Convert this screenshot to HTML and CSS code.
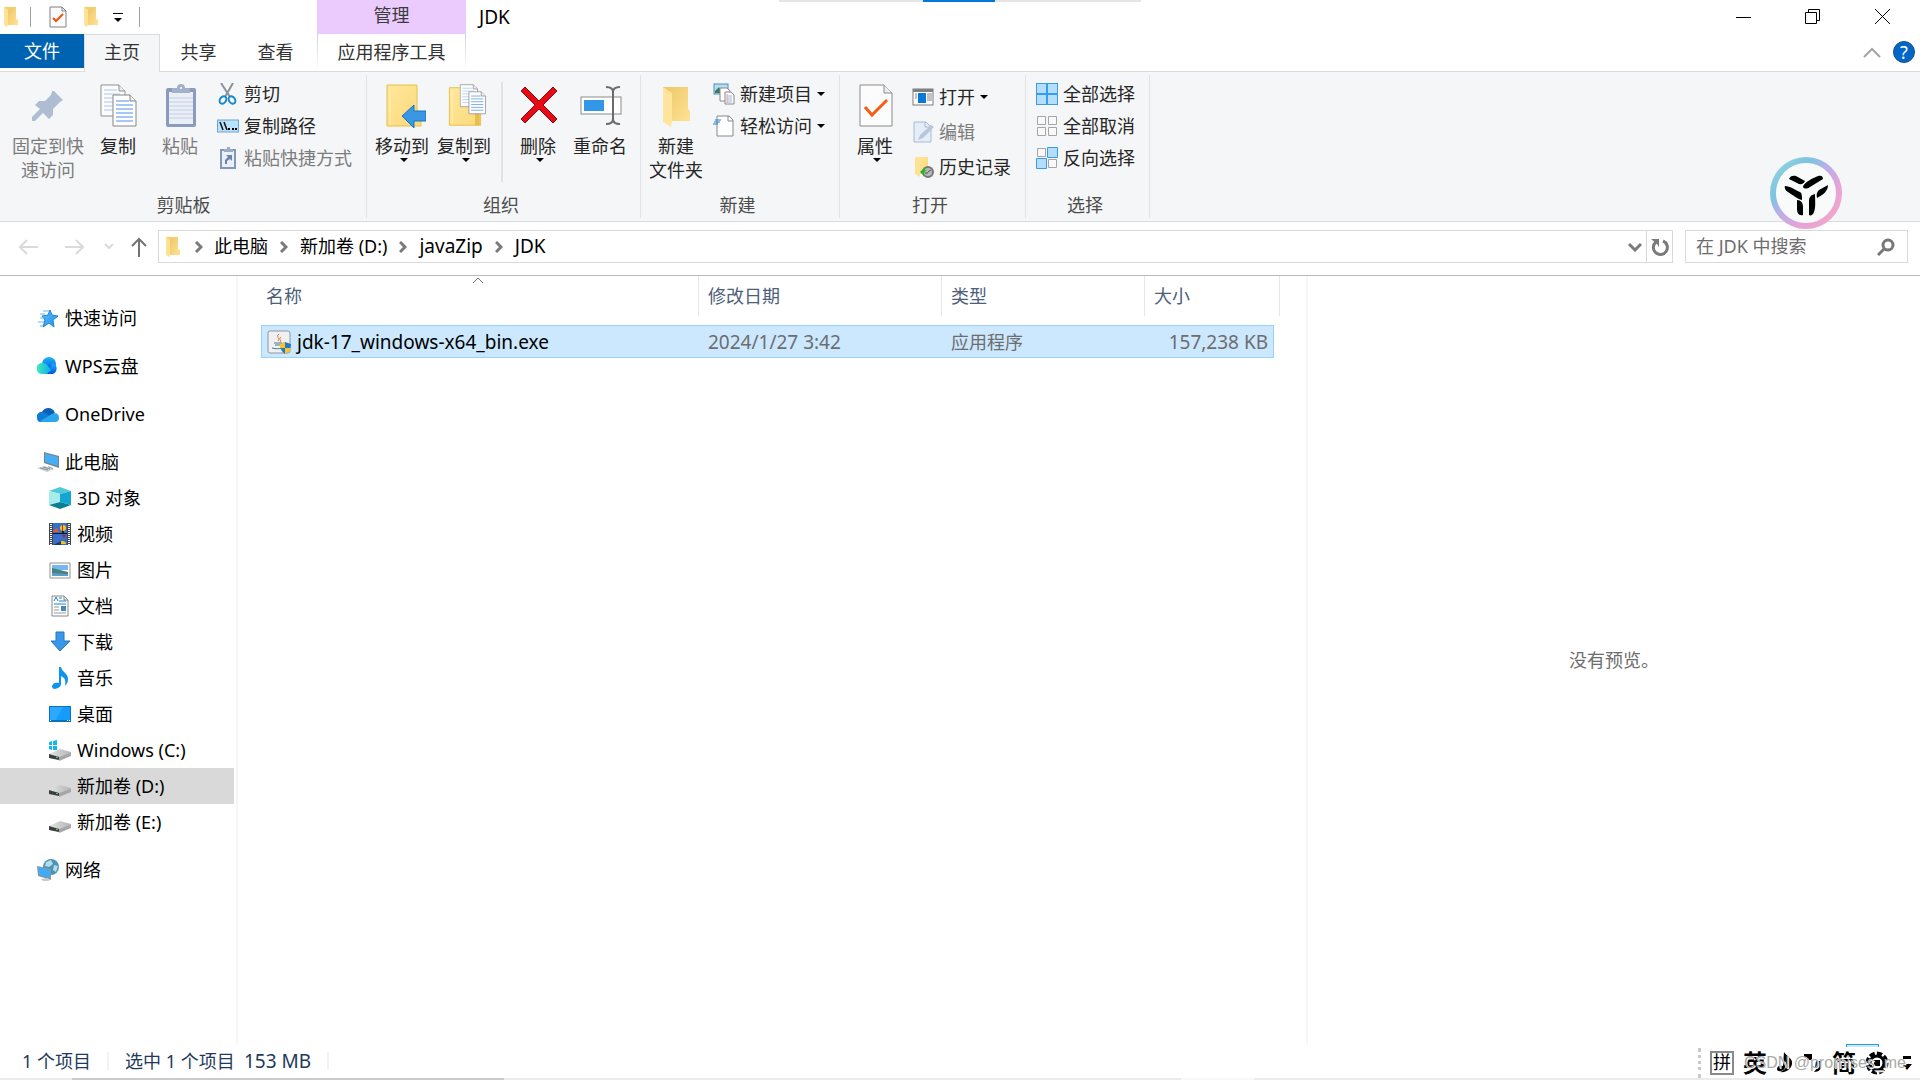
FILE: index.html
```html
<!DOCTYPE html>
<html lang="zh-CN">
<head>
    <meta charset="utf-8">
    <title>JDK</title>
    <link rel="stylesheet" href="styles.css">
</head>
<body>
    <!-- shared icons -->
    <svg class="defs" aria-hidden="true">
        <defs>
            <linearGradient id="gold" x1="0" y1="0" x2="1" y2="1">
                <stop offset="0" stop-color="#ffe79b"/>
                <stop offset="1" stop-color="#fbd978"/>
            </linearGradient>
            <linearGradient id="goldDark" x1="0" y1="0" x2="1" y2="1">
                <stop offset="0" stop-color="#ecc765"/>
                <stop offset="1" stop-color="#ffe294"/>
            </linearGradient>
            <linearGradient id="ring" x1="0" y1="0" x2="1" y2="1">
                <stop offset="0" stop-color="#9bd6e0"/>
                <stop offset="0.28" stop-color="#7cc4e0"/>
                <stop offset="0.45" stop-color="#b8b0ea"/>
                <stop offset="0.7" stop-color="#e6a3d6"/>
                <stop offset="1" stop-color="#f7a8c4"/>
            </linearGradient>
            <linearGradient id="sky" x1="0" y1="0" x2="1" y2="1">
                <stop offset="0" stop-color="#5fbcf7"/>
                <stop offset="1" stop-color="#1e93ee"/>
            </linearGradient>
            <linearGradient id="wpsLeft" x1="0" y1="0" x2="1" y2="0">
                <stop offset="0" stop-color="#3df0b4"/>
                <stop offset="1" stop-color="#12a8f0"/>
            </linearGradient>
            <linearGradient id="wpsRight" x1="0" y1="0" x2="0" y2="1">
                <stop offset="0" stop-color="#18b8fa"/>
                <stop offset="1" stop-color="#0850dd"/>
            </linearGradient>
            <linearGradient id="metal" x1="0" y1="0" x2="1" y2="0">
                <stop offset="0" stop-color="#e4e4e6"/>
                <stop offset="1" stop-color="#b4b4b6"/>
            </linearGradient>
        </defs>

        <symbol id="folder" viewBox="0 0 16 22">
            <path d="M5 1h8v12l2 1v5H5z" fill="url(#goldDark)"/>
            <path d="M1 1l4 2v16l-1 2-3-2z" fill="#ffe294"/>
            <path d="M1 1h8l-4 3z" fill="#f6cf6c"/>
        </symbol>
        <symbol id="drive" viewBox="0 0 22 22">
            <path d="M0 15l11-5 11 3v3l-11 5-11-2z" fill="url(#metal)"/>
            <path d="M0 15l10 3v3L0 19z" fill="#3c3d40"/>
            <path d="M10 18l12-4v3l-12 5z" fill="#a5a6a8"/>
            <path d="M7 18h2v1H7z" fill="#35e045"/>
        </symbol>
        <symbol id="caret" viewBox="0 0 8 4">
            <path d="M0 0h8L4 4z"/>
        </symbol>
        <symbol id="crumb" viewBox="0 0 8 12">
            <path d="M1 1l5 5-5 5" fill="none" stroke="#7a7a7a" stroke-width="3"/>
        </symbol>
        <symbol id="sheets" viewBox="0 0 38 44">
            <path d="M1 1h18l6 6v25H1z" fill="#fcfcfc" stroke="#8f8f8f"/>
            <path d="M19 1v6h6" fill="#eee" stroke="#8f8f8f"/>
            <path d="M4 6h13M4 10h16M4 14h12M4 18h12M4 22h12M4 26h12" stroke="#a9c8f5"/>
            <path d="M13 11h17l6 6v25H13z" fill="#fff" stroke="#858585"/>
            <path d="M30 11v6h6" fill="#eee" stroke="#858585"/>
            <path d="M16 17h13M16 21h17M16 25h17M16 29h17M16 33h17M16 37h17" stroke="#4f8fe8"/>
        </symbol>
    </svg>

    <div class="drag-strip"></div>

    <header class="titlebar">
        <div class="quick-tools">
            <svg class="folder-small"><use href="#folder"/></svg>
            <span class="tool-sep"></span>
            <button class="tool tool-props" aria-label="属性">
                <svg width="18" height="22" viewBox="0 0 18 22"><path d="M1 1h12l4 4v16H1z" fill="#fbfbfb" stroke="#808080"/><path d="M13 1v4h4" fill="none" stroke="#808080"/><path d="M4 12l3 3 7-7" fill="none" stroke="#f2500f" stroke-width="2"/></svg>
            </button>
            <button class="tool tool-folder" aria-label="新建文件夹"><svg class="folder-small"><use href="#folder"/></svg></button>
            <button class="tool" aria-label="自定义快速访问工具栏">
                <svg width="10" height="9" viewBox="0 0 10 9"><path d="M0 0h10v1H0zM1 5h8L5 9z"/></svg>
            </button>
            <span class="tool-sep"></span>
        </div>
        <div class="context-title">管理</div>
        <div class="title latin">JDK</div>
        <div class="window-buttons">
            <button aria-label="最小化"><svg width="15" height="15"><path d="M0 7h15v1H0z"/></svg></button>
            <button aria-label="还原"><svg width="16" height="16" fill="none" stroke="#000"><path d="M0.500 3.500h11v11h-11zM3.500 3V.5h11v11H12"/></svg></button>
            <button aria-label="关闭"><svg width="16" height="16" stroke="#000"><path d="M0 0l15 15M15 0L0 15"/></svg></button>
        </div>
    </header>

    <nav class="tabs">
        <button class="tab tab-file">文件</button>
        <button class="tab tab-active">主页</button>
        <button class="tab">共享</button>
        <button class="tab">查看</button>
        <button class="tab tab-context">应用程序工具</button>
        <div class="tabs-right">
            <button aria-label="折叠功能区"><svg width="18" height="11" fill="none" stroke="#a3a3a3" stroke-width="2"><path d="M1 10l8-8 8 8"/></svg></button>
            <button class="help" aria-label="帮助">?</button>
        </div>
    </nav>

    <section class="ribbon">
        <div class="group group-clip">
            <div class="group-body">
                <button class="big big-wide disabled">
                    <svg width="34" height="44" viewBox="0 0 34 44"><path d="M22 7l9 9-3 2-1 1-6 6v6l-4 4-6-6L3 37H0v-4l8-8-5-4 4-4h6l6-6 1-4z" fill="#aebdd2"/></svg>
                    <span>固定到快<br>速访问</span>
                </button>
                <button class="big">
                    <svg width="38" height="44"><use href="#sheets"/></svg>
                    <span>复制</span>
                </button>
                <button class="big disabled">
                    <svg width="32" height="44" viewBox="0 0 32 44"><rect x="1" y="4" width="30" height="39" rx="2" fill="#8b9bbd"/><path d="M4 8h24v32H4z" fill="#e9eef7"/><path d="M4 14h24M4 18h24M4 22h24M4 26h24M4 30h24M4 34h24" stroke="#c3cfe2"/><path d="M7 4h5a4 4 0 0 1 8 0h5v5H7z" fill="#a2b0cb"/><circle cx="16" cy="4" r="1" fill="#fff"/></svg>
                    <span>粘贴</span>
                </button>
                <div class="stack">
                    <button class="small">
                        <svg width="22" height="22" viewBox="0 0 22 22"><path d="M4 0l9 14M16 0L8 14" stroke="#8d9299" stroke-width="2"/><g fill="none" stroke="#1787cf" stroke-width="2"><ellipse cx="6" cy="17" rx="3" ry="4" transform="rotate(35 6 17)"/><ellipse cx="15" cy="17" rx="3" ry="4" transform="rotate(-35 15 17)"/></g></svg>
                        剪切
                    </button>
                    <button class="small">
                        <svg width="22" height="22" viewBox="0 0 22 22"><rect x="0.500" y="5" width="21" height="12" fill="#b9e2fb" stroke="#6aa5d0"/><path d="M3 7l3 8M7 7l3 8" stroke="#111" stroke-width="1.500"/><path d="M11 13h2v2h-2zM15 13h2v2h-2zM18 13h2v2h-2z"/></svg>
                        复制路径
                    </button>
                    <button class="small disabled">
                        <svg width="22" height="22" viewBox="0 0 22 22"><rect x="3" y="2" width="16" height="20" fill="#8497b9"/><path d="M5 4h12v16H5z" fill="#eaf0f9"/><path d="M7 2h3V0h3v2h3v3H7z" fill="#9babc7"/><path d="M8 17v-4l3-3-2-2h6v6l-2-2-3 2v3z" fill="#6b82ab"/></svg>
                        粘贴快捷方式
                    </button>
                </div>
            </div>
            <div class="group-name">剪贴板</div>
        </div>

        <div class="group group-org">
            <div class="group-body">
                <button class="big">
                    <svg width="46" height="44" viewBox="-6 0 46 44"><path d="M1 1h30v25l4 3v13H1z" fill="url(#gold)" stroke="#e6c04d"/><path d="M4 3v37" stroke="#fff0bd"/><path d="M16 32l12-11v6h12v10H28v7z" fill="#3a97e6" stroke="#1f72ba"/></svg>
                    <span>移动到</span>
                    <svg class="caret"><use href="#caret"/></svg>
                </button>
                <button class="big">
                    <svg width="48" height="48" viewBox="-6 0 48 48"><path d="M1 4h30v26l4 3v12H1z" fill="url(#gold)" stroke="#e6c04d"/><path d="M4 6v37" stroke="#fff0bd"/><path d="M29 31l5 2v12h-5z" fill="#e8bd50"/><svg x="12" y="0" width="30" height="34" viewBox="0 0 38 44" preserveAspectRatio="none"><use href="#sheets"/></svg></svg>
                    <span>复制到</span>
                    <svg class="caret"><use href="#caret"/></svg>
                </button>
                <span class="group-sep"></span>
                <button class="big">
                    <svg width="38" height="44" viewBox="0 0 38 44"><path d="M1 7l4-4 14 14L33 3l4 4-14 14 14 14-4 4-14-14L5 39l-4-4 14-14z" fill="#e60a14" stroke="#8d0c12" stroke-width="1"/></svg>
                    <span>删除</span>
                    <svg class="caret"><use href="#caret"/></svg>
                </button>
                <button class="big">
                    <svg width="42" height="44" viewBox="0 0 42 44"><rect x="1" y="13" width="40" height="17" fill="#fff" stroke="#8b8b8b"/><path d="M4 16h20v11H4z" fill="#3397e8"/><path d="M26 3c5 0 7 2 7 5 0-3 2-5 7-5M33 8v27M26 40c5 0 7-2 7-5 0 3 2 5 7 5" fill="none" stroke="#6b6b6b" stroke-width="2"/></svg>
                    <span>重命名</span>
                </button>
            </div>
            <div class="group-name">组织</div>
        </div>

        <div class="group group-new">
            <div class="group-body">
                <button class="big">
                    <svg width="30" height="44" viewBox="0 0 30 44"><path d="M1 3h25v22l2 2v10H8z" fill="url(#goldDark)"/><path d="M1 3l9 6v28l-1 6-8-5z" fill="#ffe49b"/></svg>
                    <span>新建<br>文件夹</span>
                </button>
                <div class="stack">
                    <button class="small">
                        <svg width="22" height="22" viewBox="0 0 22 22"><rect x="1" y="1" width="14" height="10" fill="#b6ddf0" stroke="#4d8db3"/><path d="M2 8l4-4 3 6H2z" fill="#397b6a"/><path d="M7 5h7l3 3v10H7z" fill="#fff" stroke="#888"/><path d="M12 9h6l3 3v9h-9z" fill="#fff" stroke="#888"/><path d="M14 13h5M14 15h5M14 17h5M14 19h5" stroke="#9bb8e0"/><path d="M14 11v9" stroke="#e99"/></svg>
                        新建项目
                        <svg class="caret"><use href="#caret"/></svg>
                    </button>
                    <button class="small">
                        <svg width="22" height="22" viewBox="0 0 22 22"><path d="M4 1h12l4 4v16H4z" fill="#fff" stroke="#888"/><path d="M15 1v5h5" fill="none" stroke="#888"/><path d="M2 5h6M1 7h6M0 9h5" stroke="#1c7fcc"/></svg>
                        轻松访问
                        <svg class="caret"><use href="#caret"/></svg>
                    </button>
                </div>
            </div>
            <div class="group-name">新建</div>
        </div>

        <div class="group group-open">
            <div class="group-body">
                <button class="big">
                    <svg width="34" height="44" viewBox="0 0 34 44"><path d="M1 1h24l8 8v33H1z" fill="#fcfcfc" stroke="#8a8a8a"/><path d="M25 1v8h8" fill="#eee" stroke="#8a8a8a"/><path d="M6 23l7 8 15-15" fill="none" stroke="#f95c10" stroke-width="3"/></svg>
                    <span>属性</span>
                    <svg class="caret"><use href="#caret"/></svg>
                </button>
                <div class="stack stack-tall">
                    <button class="small">
                        <svg width="22" height="22" viewBox="0 0 22 22"><rect x="1" y="3" width="20" height="16" fill="#fff" stroke="#7d7d7d"/><path d="M1 3h20v3H1z" fill="#808080"/><path d="M6 7h8v10H6z" fill="#0a78d6"/><path d="M3 8h2M3 10h2M3 12h2M15 8h5M15 10h5M15 12h5M15 14h5" stroke="#888"/></svg>
                        打开
                        <svg class="caret"><use href="#caret"/></svg>
                    </button>
                    <button class="small disabled">
                        <svg width="22" height="22" viewBox="0 0 22 22"><path d="M2 1h12l5 5v15H2z" fill="#e5edf8" stroke="#a8b9d4"/><path d="M13 1v5h5" fill="none" stroke="#a8b9d4"/><path d="M6 19l2-5L19 4l3 2-11 11z" fill="#b7c6de"/></svg>
                        编辑
                    </button>
                    <button class="small">
                        <svg width="22" height="22" viewBox="0 0 22 22"><path d="M3 1h13v17H6z" fill="url(#gold)"/><path d="M3 1l5 3v15l-1 2-4-3z" fill="#ffe294"/><circle cx="16" cy="16" r="5" fill="#b5b9b9" stroke="#777" stroke-width="2"/><path d="M16 16l3-2M13 17h3" fill="none" stroke="#555"/><path d="M8 16l5-5v3h3c-3 0-4 2-4 6z" fill="#28b52d"/></svg>
                        历史记录
                    </button>
                </div>
            </div>
            <div class="group-name">打开</div>
        </div>

        <div class="group group-select">
            <div class="group-body">
                <div class="stack">
                    <button class="small">
                        <svg width="22" height="22" viewBox="0 0 22 22"><path d="M0 0h22v22H0z" fill="#3a9be8"/><path d="M1 1h9v9H1zM12 1h9v9h-9zM1 12h9v9H1zM12 12h9v9h-9z" fill="#b3defc"/></svg>
                        全部选择
                    </button>
                    <button class="small">
                        <svg width="22" height="22" viewBox="0 0 22 22" fill="#f9f9f9" stroke="#a5a5a5"><path d="M1.500 1.500h8v8h-8zM12.500 1.500h8v8h-8zM1.500 12.500h8v8h-8zM12.500 12.500h8v8h-8z"/></svg>
                        全部取消
                    </button>
                    <button class="small">
                        <svg width="22" height="22" viewBox="0 0 22 22"><path d="M1.500 1.500h8v8h-8zM12.500 12.500h8v8h-8z" fill="#f9f9f9" stroke="#a5a5a5"/><path d="M11.500 .5h10v10h-10zM.5 11.500h10v10H.5z" fill="#b3defc" stroke="#3a9be8"/></svg>
                        反向选择
                    </button>
                </div>
            </div>
            <div class="group-name">选择</div>
        </div>
    </section>

    <section class="address-row">
        <div class="history">
            <button aria-label="后退"><svg width="20" height="18" fill="none" stroke="#dadada" stroke-width="2"><path d="M19 9H1M8 2L1 9l7 7"/></svg></button>
            <button aria-label="前进"><svg width="20" height="18" fill="none" stroke="#dadada" stroke-width="2"><path d="M0 9h18M11 2l7 7-7 7"/></svg></button>
            <button aria-label="最近位置"><svg width="10" height="8" fill="none" stroke="#dadada" stroke-width="2"><path d="M1 1l4 4 4-4"/></svg></button>
            <button aria-label="上移"><svg width="17" height="20" fill="none" stroke="#737373" stroke-width="2"><path d="M8 20V2M1 9l7-7 7 7"/></svg></button>
        </div>
        <div class="address">
            <svg class="folder-small"><use href="#folder"/></svg>
            <svg class="crumb"><use href="#crumb"/></svg>
            <a href="#">此电脑</a>
            <svg class="crumb"><use href="#crumb"/></svg>
            <a href="#">新加卷 (D:)</a>
            <svg class="crumb"><use href="#crumb"/></svg>
            <a href="#" class="latin">javaZip</a>
            <svg class="crumb"><use href="#crumb"/></svg>
            <a href="#" class="latin">JDK</a>
            <button class="address-drop" aria-label="以前的位置"><svg width="14" height="10" fill="none" stroke="#7a7a7a" stroke-width="3"><path d="M1 2l6 6 6-6"/></svg></button>
            <button class="refresh" aria-label="刷新"><svg width="18" height="18" viewBox="0 0 18 18"><path d="M12 3a7 7 0 1 1-7 1" fill="none" stroke="#7a7a7a" stroke-width="3"/><path d="M0 1h8v8L6 6z" fill="#7a7a7a"/></svg></button>
        </div>
        <label class="search">
            <input type="text" placeholder="在 JDK 中搜索" aria-label="搜索">
            <svg width="18" height="18" viewBox="0 0 18 18" fill="none" stroke="#777" stroke-width="3"><circle cx="11" cy="7" r="5"/><path d="M7 11l-6 6"/></svg>
        </label>
    </section>

    <main class="content">
        <nav class="tree">
            <a href="#">
                <svg viewBox="0 0 22 22"><path d="M13 3l2 5 6 1-5 4 1 7-5-4-6 4 2-7-3-4 6-1z" fill="url(#sky)" stroke="#1c86d8"/><path d="M6 4h6M3 7h5M3 11h4M1 15h6M3 19h3" stroke="#69b6ee"/></svg>
                快速访问
            </a>
            <a href="#">
                <svg viewBox="0 0 22 22"><circle cx="12" cy="9" r="7" fill="url(#wpsRight)"/><path d="M9 19l7-11a6 6 0 0 1 0 11z" fill="url(#wpsRight)"/><path d="M5 8a6 6 0 0 1 6 3l3 4-4 4H5A5 5 0 0 1 5 8z" fill="url(#wpsLeft)"/></svg>
                WPS云盘
            </a>
            <a href="#">
                <svg viewBox="0 0 22 22"><path d="M0 14c0-3 2-5 5-5 3-6 11-5 13 1l-7 4z" fill="#0a5fb8"/><path d="M0 14a5 5 0 0 1 8-4l9 5-13 4c-3 0-4-2-4-5z" fill="#0d7bd8"/><path d="M3 18l12-7c4-2 7 0 7 4 0 2-1 4-4 4H5z" fill="#29a6ec"/></svg>
                OneDrive
            </a>
            <a href="#">
                <svg viewBox="0 0 22 22"><path d="M7 1l15 4v12L7 12z" fill="#7a8288"/><path d="M8 2l13 4v9L8 11z" fill="#45aef5"/><path d="M11 15l5 2v2l-4-1z" fill="#8f979c"/><path d="M0 17l8-2 9 3-7 3z" fill="#c9ced2"/><path d="M3 17l8 2M6 16l7 2" stroke="#8f979c"/></svg>
                此电脑
            </a>
            <a href="#" class="child">
                <svg viewBox="0 0 22 22"><path d="M0 4l11-4 11 4-11 3z" fill="#4fc9d8"/><path d="M0 4l11 3v8L0 18z" fill="#a5ecea"/><path d="M22 4L11 7v8l11 3z" fill="#14a6cf"/><path d="M0 18l11-3 11 3-11 4z" fill="#087f94"/></svg>
                3D 对象
            </a>
            <a href="#" class="child">
                <svg viewBox="0 0 22 22"><path d="M0 0h22v22H0z" fill="#42454a"/><path d="M4 0h14v22H4z" fill="#3470cc"/><path d="M2 1v21M20 1v21" stroke="#fff" stroke-width="2" stroke-dasharray="1 1"/><path d="M4 10h14v1H4z" fill="#111"/><circle cx="14" cy="5" r="3" fill="#f4c51c"/><path d="M13 2h1v6h-1z" fill="#c22"/><path d="M13 8h2v2h-2z" fill="#222"/><path d="M4 8l4-3 2 4H4z" fill="#e05a36"/><path d="M10 21c0-4 7-4 7 0z" fill="#f4c51c"/><path d="M13 12h4l-2 3z" fill="#b32323"/><path d="M4 22l8-4v4z" fill="#263a5c"/></svg>
                视频
            </a>
            <a href="#" class="child">
                <svg viewBox="0 0 22 22"><path d="M1 4h20v15H1z" fill="#fff" stroke="#929292"/><path d="M3 6h16v5H3z" fill="#76b6f2"/><path d="M3 9l16 4v4H3z" fill="#47827d"/><path d="M3 14l16 1v2H3z" fill="#5a9ecb"/></svg>
                图片
            </a>
            <a href="#" class="child">
                <svg viewBox="0 0 22 22"><path d="M3 1h12l4 4v16H3z" fill="#fff" stroke="#888"/><path d="M15 1v4h4" fill="none" stroke="#888"/><path d="M5 6l2-4 2 4M10 3h3M10 6h7M5 9h12" fill="none" stroke="#1c82d0"/><path d="M5 12h5M5 15h5M5 18h12" stroke="#999"/><path d="M12 11h5v5h-5z" fill="#4788b8"/></svg>
                文档
            </a>
            <a href="#" class="child">
                <svg viewBox="0 0 22 22"><path d="M7 1h8v9h6L11 20 2 10h5z" fill="#3a96e6" stroke="#2579c0"/></svg>
                下载
            </a>
            <a href="#" class="child">
                <svg viewBox="0 0 22 22"><path d="M10 0h2c1 5 7 6 7 12 0 3-1 5-3 7 1-6 0-8-4-10v8c0 4-8 7-9 3 0-4 4-5 7-4z" fill="#0f93ec"/></svg>
                音乐
            </a>
            <a href="#" class="child">
                <svg viewBox="0 0 22 22"><path d="M0 3h22v16H0z" fill="#0873bd"/><path d="M1 4h20v13H1z" fill="#149bfb"/><path d="M1 4h13L7 17H1z" fill="#2ca8fd"/><path d="M1 17h1v1H1zM18 17h1v1h-1zM20 17h1v1h-1z" fill="#fff"/></svg>
                桌面
            </a>
            <a href="#" class="child">
                <svg viewBox="0 0 22 22"><use href="#drive"/><path d="M0 3l3-1v4H0zM4 2l4-1v5H4zM0 7h3v4L0 10zM4 7h4v4H4z" fill="#10b8f2"/></svg>
                Windows (C:)
            </a>
            <a href="#" class="child selected">
                <svg viewBox="0 0 22 22"><use href="#drive"/></svg>
                新加卷 (D:)
            </a>
            <a href="#" class="child">
                <svg viewBox="0 0 22 22"><use href="#drive"/></svg>
                新加卷 (E:)
            </a>
            <a href="#">
                <svg viewBox="0 0 22 22"><circle cx="14" cy="8" r="8" fill="#4a94b8"/><path d="M9 3l5-2 2 4-4 3-4-1zM17 6l4 1-2 6-3-2z" fill="#b5dcec"/><path d="M0 7l14 3v11L1 17z" fill="#8b969c"/><path d="M1 8l12 3v8L2 16z" fill="#41abf5"/><path d="M4 20l7-1 1 3H6z" fill="#c4cacd"/></svg>
                网络
            </a>
        </nav>

        <section class="files">
            <table>
                <colgroup>
                    <col class="col-name">
                    <col class="col-date">
                    <col class="col-type">
                    <col class="col-size">
                    <col class="col-edge">
                </colgroup>
                <thead>
                    <tr>
                        <th>名称
                            <svg class="sort" width="12" height="7" fill="none" stroke="#6d6d6d"><path d="M1 6l5-5 5 5"/></svg>
                        </th>
                        <th>修改日期</th>
                        <th>类型</th>
                        <th colspan="2">大小</th>
                    </tr>
                </thead>
                <tbody>
                    <tr class="row">
                        <td class="latin">
                            <div class="file-name">
                                <svg width="24" height="24" viewBox="0 0 24 24"><rect x="1" y="1" width="22" height="22" rx="2" fill="#eff0f2" stroke="#8d979f"/><path d="M12 4c-4 3 2 4-1 7M14 7c-3 2 1 3-1 5" fill="none" stroke="#e8762c" stroke-width="1"/><path d="M7 13h8M8 15h6M5 18c4 1 7 1 10 0" fill="none" stroke="#4c7389" stroke-width="1"/><path d="M13 14l5-2 6 2c0 5-2 8-6 10-3-2-5-5-5-10z" fill="#2579c9"/><path d="M18 12l-5 2v4h5zM18 18v6c3-1 5-3 6-6z" fill="#fbc42c"/></svg>
                                jdk-17_windows-x64_bin.exe
                            </div>
                        </td>
                        <td class="latin">2024/1/27 3:42</td>
                        <td>应用程序</td>
                        <td class="latin file-size">157,238 KB</td>
                    </tr>
                </tbody>
            </table>
        </section>

        <aside class="preview">没有预览。</aside>
    </main>

    <footer class="status">
        <span class="status-item">1 个项目</span>
        <span class="status-item">选中 1 个项目&nbsp; <span class="latin">153 MB</span></span>
        <div class="ime">
            <span class="grip"></span>
            <span class="ime-mode">拼</span>
            <span class="ime-lang">英</span>
            <svg width="18" height="22" viewBox="0 0 18 22"><path d="M8 0c2 4 9 6 8 12-1 5-6 9-12 8 6-2 8-6 5-11v6c0 4-8 6-8 2 0-3 3-4 6-3z"/></svg>
            <svg width="20" height="22" viewBox="0 0 20 22"><path d="M1 2h8v6H4V5H1zM13 9h5v5c0 3-2 6-7 6l3-4h-2z"/></svg>
            <span class="ime-lang">简</span>
            <svg width="24" height="24" viewBox="0 0 24 24"><circle cx="12" cy="12" r="9" fill="none" stroke="#000" stroke-width="5" stroke-dasharray="5 2"/><circle cx="12" cy="12" r="7" fill="none" stroke="#000" stroke-width="3"/><path d="M9 9h6v6H9z"/></svg>
            <svg width="14" height="16" viewBox="-4 0 14 16"><path d="M1 1h8v3H1zM0 9h10l-5 6z"/></svg>
        </div>
        <span class="watermark">CSDN @promises_me</span>
        <span class="ime-edge"></span>
    </footer>
    <div class="bottom-strip"></div>

    <div class="float-logo">
        <svg width="72" height="72" viewBox="0 0 72 72">
            <circle cx="36" cy="36" r="33" fill="#f9fbfb" stroke="url(#ring)" stroke-width="6"/>
            <path d="M19 22c1-3 4-4 7-3l9 5c-2 4-5 4-8 2zM33 30c0-4 10-9 15-11 3-1 5 0 5 3l-13 8c-3 2-6 2-7 0zM15 29c5 0 10 4 15 6 2 1 2 4 2 8-5-1-9-5-14-8-2-1-4-4-3-6zM58 28c0 6-5 10-11 13-1-4 0-6 2-8zM27 43c4 0 6 3 6 7v8c-4 1-6-2-6-6zM45 37c0 6 1 13-1 18-1 3-3 4-5 3V44c0-4 2-6 6-7z"/>
        </svg>
    </div>
</body>
</html>
```
FILE: styles.css
```css
* {
    box-sizing: border-box;
}

body {
    margin: 0;
    min-height: 100vh;
    display: flex;
    flex-direction: column;
    position: relative;
    background: #fff;
    color: #000;
    font-family: "Noto Sans", "Noto Sans CJK SC", sans-serif;
    font-size: 18px;
    line-height: 24px;
}

button {
    margin: 0;
    padding: 0;
    border: 0;
    background: none;
    color: inherit;
    font: inherit;
    cursor: pointer;
}

a {
    color: inherit;
    text-decoration: none;
}

svg {
    display: block;
    flex: none;
}

.latin {
    font-size: 19px;
}

.defs {
    position: absolute;
    width: 0;
    height: 0;
}

.folder-small {
    width: 16px;
    height: 22px;
}

/* title bar */
.drag-strip {
    position: absolute;
    top: 0;
    left: 50%;
    width: 362px;
    height: 2px;
    transform: translateX(-50%);
    background: linear-gradient(#0078d7, #0078d7) 144px 0 / 72px 2px no-repeat #e5e5e5;
}

.titlebar {
    display: flex;
    height: 34px;
}

.quick-tools {
    width: 317px;
    padding-left: 3px;
    display: flex;
    align-items: center;
}

.tool-sep {
    width: 1px;
    height: 20px;
    margin-left: 11px;
    background: #a0a0a0;
}

.tool-props {
    margin: 0 16px 0 18px;
}

.tool-folder {
    margin-right: 14px;
}

.tool + .tool-sep {
    margin-left: 16px;
}

.context-title {
    width: 149px;
    padding-top: 3px;
    background: #ebcbfd;
    color: #3b3b3b;
    text-align: center;
}

.title {
    padding: 5px 0 0 13px;
}

.window-buttons {
    margin-left: auto;
    padding-right: 2px;
    display: flex;
}

.window-buttons button {
    width: 70px;
    height: 34px;
    display: flex;
    align-items: center;
    justify-content: center;
}

/* tabs */
.tabs {
    display: flex;
    height: 38px;
    color: #333;
    border-bottom: 1px solid #dadbdc;
}

.tab {
    width: 77px;
    height: 36px;
}

.tab-file {
    width: 84px;
    height: 34px;
    background: #0063b1;
    color: #fff;
}

.tab-active {
    width: 76px;
    height: 38px;
    padding-bottom: 3px;
    background: #f5f6f7;
    border: 1px solid #dadbdc;
    border-bottom: 0;
}

.tab-context {
    width: 149px;
    margin-left: 3px;
    border: solid #dadbdc;
    border-width: 0 1px;
    border-image: linear-gradient(#cfcfcf, #fff) 1;
}

.tabs-right {
    height: 36px;
    margin-left: auto;
    padding-right: 5px;
    display: flex;
    align-items: center;
    gap: 12px;
}

.help {
    width: 22px;
    height: 22px;
    border-radius: 50%;
    background: #0067c9;
    border: 1px solid #134f87;
    color: #fff;
    line-height: 20px;
}

/* ribbon */
.ribbon {
    display: flex;
    height: 150px;
    padding: 3px 0;
    background: #f5f6f7;
    border-bottom: 1px solid #dadbdc;
    color: #262626;
}

.group {
    display: flex;
    flex-direction: column;
    justify-content: space-between;
    padding: 0 4px;
    border-right: 1px solid #e2e3e4;
}

.group-clip {
    width: 367px;
    padding-left: 10px;
}

.group-org {
    width: 274px;
}

.group-new {
    width: 199px;
}

.group-open {
    width: 186px;
}

.group-select {
    width: 124px;
}

.group-body {
    display: flex;
}

.group-name {
    padding: 0 5px 1px 0;
    color: #4c4c4c;
    text-align: center;
}

.big {
    width: 62px;
    height: 112px;
    padding-top: 7px;
    display: flex;
    flex-direction: column;
    align-items: center;
}

.big > svg:first-child {
    height: 48px;
    margin-left: 2px;
    padding: 2px 0;
}

.big span {
    margin-top: 4px;
    white-space: nowrap;
}

.big-wide {
    width: 76px;
}

.big-wide + .big {
    margin-left: 1px;
}

.caret {
    width: 8px;
    height: 4px;
}

.big .caret {
    margin-left: 4px;
}

.stack {
    display: flex;
    flex-direction: column;
    padding-top: 3px;
}

.small {
    height: 32px;
    padding: 0 6px;
    display: flex;
    align-items: center;
    gap: 5px;
    white-space: nowrap;
}

.stack-tall {
    padding-top: 4px;
}

.stack-tall .small {
    height: 35px;
}

.disabled {
    color: #7c7c7c;
}

.group-sep {
    width: 2px;
    height: 100px;
    margin: 7px 4px 0 6px;
    background: #e2e3e4;
}

/* address bar */
.address-row {
    display: flex;
    height: 54px;
    padding: 8px 12px 12px 19px;
    border-bottom: 1px solid #b9b9b9;
}

.history {
    width: 139px;
    display: flex;
    align-items: center;
}

.history button:nth-child(2) {
    margin: 0 19px 0 26px;
}

.history button:nth-child(4) {
    margin-left: 17px;
}

.address {
    flex: 1;
    display: flex;
    align-items: center;
    padding-left: 6px;
    border: 1px solid #d9d9d9;
}

.address a {
    padding-bottom: 2px;
}

.crumb {
    width: 8px;
    height: 12px;
    margin: 0 12px;
}

.folder-small + .crumb {
    margin: 0 11px 0 14px;
}

.address-drop {
    margin-left: auto;
    padding: 0 4px;
}

.refresh {
    width: 26px;
    align-self: stretch;
    padding-left: 4px;
    border-left: 1px solid #d9d9d9;
    display: flex;
    align-items: center;
}

.search {
    width: 223px;
    margin-left: 12px;
    padding: 0 12px 0 10px;
    display: flex;
    align-items: center;
    border: 1px solid #d9d9d9;
}

.search input {
    flex: 1;
    min-width: 0;
    padding: 0 0 2px;
    border: 0;
    outline: 0;
    background: none;
    font: inherit;
}

.search input::placeholder {
    color: #6d6d6d;
}

/* main area */
.content {
    flex: 1;
    display: grid;
    grid-template-columns: 238px minmax(1070px, 1fr) minmax(0, 612px);
}

.tree {
    padding: 24px 2px 0 0;
    border-right: 2px solid #f5f5f5;
}

.tree a {
    height: 36px;
    margin-bottom: 12px;
    padding-left: 37px;
    display: flex;
    align-items: center;
    gap: 6px;
}

.tree svg {
    width: 22px;
    height: 22px;
}

.tree .child {
    margin-bottom: 0;
    padding-left: 49px;
}

.tree a:nth-child(4) {
    margin-bottom: 0;
}

.tree a:last-child {
    margin-top: 12px;
}

.tree .selected {
    background: #d9d9d9;
}

.files {
    padding-left: 23px;
    border-right: 2px solid #f5f5f5;
}

.files table {
    width: 1019px;
    table-layout: fixed;
    border-collapse: separate;
    border-spacing: 0;
}

.col-name {
    width: 438px;
}

.col-date {
    width: 243px;
}

.col-type {
    width: 203px;
}

.col-edge {
    width: 6px;
}

.files th {
    position: relative;
    height: 40px;
    padding: 0 0 0 9px;
    border-right: 1px solid #e5e5e5;
    color: #4c607a;
    font-weight: normal;
    text-align: left;
}

.files th:first-child {
    padding-left: 5px;
}

.sort {
    position: absolute;
    top: 1px;
    left: 50%;
    margin-left: -8px;
}

/* space between the header and the first row */
.files tbody::before {
    content: "";
    display: table-row;
    height: 9px;
}

.row td {
    height: 33px;
    padding: 0 0 0 9px;
    background: #cce8ff;
    border: solid #99d1ff;
    border-width: 1px 0;
    color: #6d6d6d;
    white-space: nowrap;
}

.row td:first-child {
    padding-left: 5px;
    border-left-width: 1px;
    color: #000;
}

.file-name {
    display: flex;
    align-items: center;
    gap: 6px;
}

.row .file-size {
    padding-right: 5px;
    border-right-width: 1px;
    text-align: right;
}

.preview {
    display: flex;
    align-items: center;
    justify-content: center;
    color: #6d6d6d;
}

/* status bar */
.status {
    position: relative;
    height: 34px;
    display: flex;
    align-items: center;
    color: #1e395b;
}

.status-item {
    padding: 0 16px 0 22px;
    border-right: 2px solid #f2f2f2;
    line-height: 18px;
}

.status-item + .status-item {
    padding-left: 16px;
}

.ime {
    margin-left: auto;
    padding: 4px 8px 0 0;
    display: flex;
    align-items: center;
    gap: 9px;
    color: #000;
}

.grip {
    height: 30px;
    border-left: 3px dotted #c9c9c9;
}

.ime-mode {
    width: 24px;
    height: 24px;
    border: 2px solid #8a8a8a;
    line-height: 19px;
    text-align: center;
}

.ime-lang {
    font-size: 24px;
    font-weight: bold;
}

.watermark {
    position: absolute;
    right: 14px;
    top: 7px;
    color: #a9a9a9;
    font-family: "Liberation Sans", sans-serif;
    font-size: 16px;
    text-shadow: 1px 1px 0 #fff;
}

.ime-edge {
    position: absolute;
    right: 41px;
    top: 0;
    width: 33px;
    height: 3px;
    background: #cce8f8;
    border: 1px solid #26a0da;
    border-bottom: 0;
}

.bottom-strip {
    height: 2px;
    background: linear-gradient(90deg, #ebebeb 72px, #cbcbcb 72px, #cbcbcb 504px, #ebebeb 504px, #ebebeb 1181px, #f8f8f8 1181px, #f8f8f8 1254px, #ebebeb 1254px);
}

.float-logo {
    position: absolute;
    top: 157px;
    right: 78px;
}
```
